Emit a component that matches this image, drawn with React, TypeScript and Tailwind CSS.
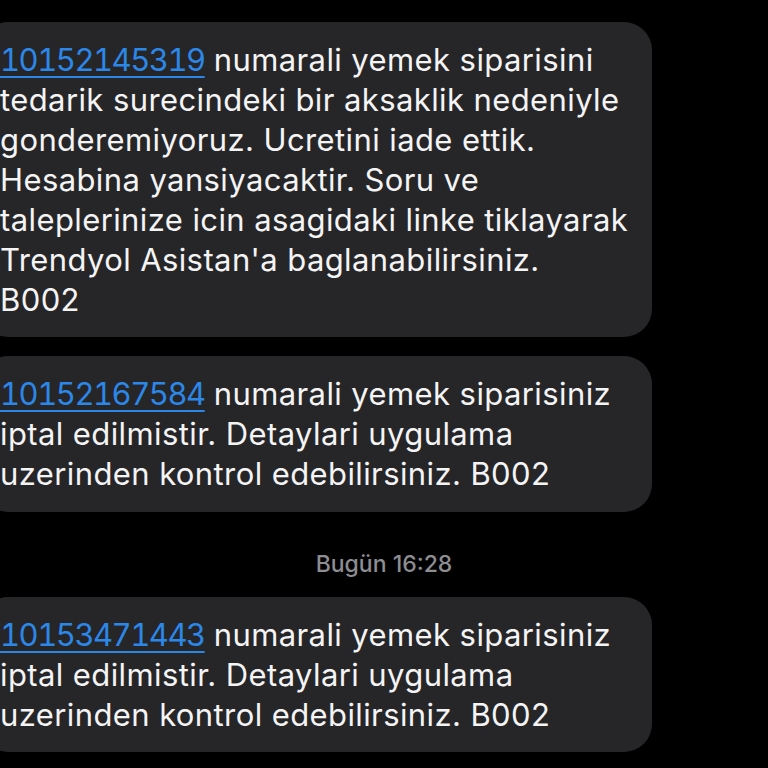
const link = "text-[#2b87e8] underline decoration-[2px] underline-offset-[5px] tabular-nums tracking-[-1.5px]";

function Bubble({ lines, className }: { lines: React.ReactNode[]; className?: string }) {
  return (
    <div
      className={`-ml-[20px] w-[672px] rounded-[28px] bg-[#262628] pl-[20px] text-[31px] leading-[40px] tracking-[0.4px] text-[#f4f4f5] whitespace-nowrap ${className ?? ""}`}
    >
      {lines.map((l, i) => (
        <div key={i}>{l}</div>
      ))}
    </div>
  );
}

export default function App() {
  return (
    <div
      className="h-screen w-full overflow-hidden bg-black pt-[22px]"
      style={{ fontFamily: "Inter, 'Noto Sans', sans-serif" }}
    >
      <Bubble
        className="pt-[18px] pb-[17px]"
        lines={[
          <>
            <span className={link}>10152145319</span> numarali yemek siparisini
          </>,
          "tedarik surecindeki bir aksaklik nedeniyle",
          "gonderemiyoruz. Ucretini iade ettik.",
          "Hesabina yansiyacaktir. Soru ve",
          "taleplerinize icin asagidaki linke tiklayarak",
          "Trendyol Asistan'a baglanabilirsiniz.",
          "B002",
        ]}
      />
      <Bubble
        className="mt-[19px] pt-[18px] pb-[18px]"
        lines={[
          <>
            <span className={link}>10152167584</span> numarali yemek siparisiniz
          </>,
          "iptal edilmistir. Detaylari uygulama",
          "uzerinden kontrol edebilirsiniz. B002",
        ]}
      />
      <div className="mt-[39px] mb-[20px] text-center text-[23px] leading-[26px] font-medium text-[#8d8d92]">
        Bugün 16:28
      </div>
      <Bubble
        className="pt-[18px] pb-[17px]"
        lines={[
          <>
            <span className={link}>10153471443</span> numarali yemek siparisiniz
          </>,
          "iptal edilmistir. Detaylari uygulama",
          "uzerinden kontrol edebilirsiniz. B002",
        ]}
      />
    </div>
  );
}
